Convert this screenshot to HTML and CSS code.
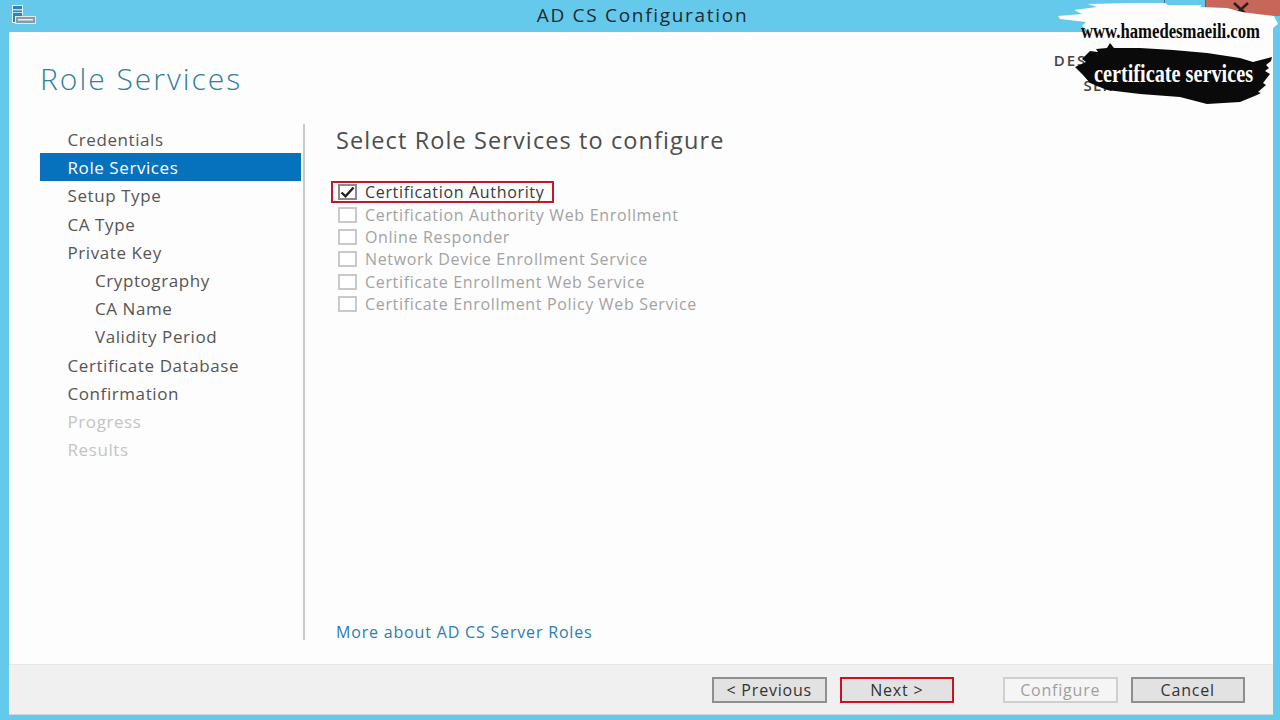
FILE: index.html
```html
<!DOCTYPE html>
<html lang="en">
<head>
<meta charset="utf-8">
<title>AD CS Configuration</title>
<link rel="stylesheet" href="styles.css">
</head>
<body>
<div class="window">
  <header class="titlebar">
    <svg class="app-icon" width="26" height="26" viewBox="0 0 26 26">
      <rect x="1.5" y="1.5" width="10" height="17" fill="#2f7fc4" stroke="#e6f3fa" stroke-width="1"/>
      <rect x="2" y="5" width="9" height="1.5" fill="#bfe0f2"/>
      <rect x="2" y="8" width="9" height="1" fill="#bfe0f2"/>
      <path d="M11 11h8v2h-8z" fill="#a9b4bb"/>
      <rect x="4.5" y="12.5" width="20" height="7" fill="#8b9aa5" stroke="#dfeaef" stroke-width="1"/>
      <rect x="7" y="15" width="15" height="1.5" fill="#e4edf1"/>
    </svg>
    <div class="title">AD CS Configuration</div>
    <div class="controls">
      <span class="ctl"></span>
      <span class="ctl"></span>
      <span class="ctl close"><svg width="16" height="16" viewBox="0 0 16 16"><path d="M1 2 15 15M15 2 1 15" stroke="#2a2220" stroke-width="2.6" fill="none"/></svg></span>
    </div>
  </header>
  <main class="panel">
    <div class="head">
      <h1>Role Services</h1>
      <div class="dest"><span class="dest-label">DESTINATION SERVER</span><span>SERVER.contoso.lan</span></div>
    </div>
    <div class="body">
      <nav class="nav">
        <a>Credentials</a>
        <a class="active">Role Services</a>
        <a>Setup Type</a>
        <a>CA Type</a>
        <a>Private Key</a>
        <a class="sub">Cryptography</a>
        <a class="sub">CA Name</a>
        <a class="sub">Validity Period</a>
        <a>Certificate Database</a>
        <a>Confirmation</a>
        <a class="off">Progress</a>
        <a class="off">Results</a>
      </nav>
      <section class="content">
        <h2>Select Role Services to configure</h2>
        <ul class="roles">
          <li class="role on"><span class="box"><svg width="15" height="12" viewBox="0 0 15 12"><path d="M1.5 6.5 5.5 10.3 13.5 1.5" fill="none" stroke="#222" stroke-width="2.4"/></svg></span>Certification Authority</li>
          <li class="role"><span class="box"></span>Certification Authority Web Enrollment</li>
          <li class="role"><span class="box"></span>Online Responder</li>
          <li class="role"><span class="box"></span>Network Device Enrollment Service</li>
          <li class="role"><span class="box"></span>Certificate Enrollment Web Service</li>
          <li class="role"><span class="box"></span>Certificate Enrollment Policy Web Service</li>
        </ul>
        <a class="more">More about AD CS Server Roles</a>
      </section>
    </div>
    <footer class="footer">
      <button class="btn">&lt; Previous</button>
      <button class="btn next">Next &gt;</button>
      <button class="btn dis">Configure</button>
      <button class="btn">Cancel</button>
    </footer>
  </main>
</div>
<div class="mark">
  <svg class="brush" width="228" height="110" viewBox="0 0 228 110">
    <path d="M6 16 30 14 22 10 45 7 36 4 80 3 113 3 116 5 150 5 148 7 175 8 190 12 205 14 222 16 226 24 221 28 221 66 150 66 150 50 40 34 30 26 34 22 8 19Z" fill="#fdfdfd"/>
    <path d="M23 67 34 62 30 59 38 51 46 52 44 49 55 48 58 43 62 48 88 48 121 50 155 53 188 58 201 62 220 57 219 61 214 65 217 68 213 71 218 74 211 83 214 85 206 92 209 93 205 95 188 102 155 104 128 97 88 94 55 90 38 83 31 75Z" fill="#0a0a0a"/>
  </svg>
  <div class="site">www.hamedesmaeili.com</div>
  <div class="tag">certificate services</div>
</div>
</body>
</html>
```
FILE: styles.css
```css
*, *::after { box-sizing: border-box; }
html, body { margin: 0; height: 100%; overflow: hidden; }
body { width: 1280px; height: 720px; position: relative; font-family: "Open Sans", "Liberation Sans", sans-serif; background: #65c9ec; }
.window { width: 1280px; height: 720px; display: flex; flex-direction: column; padding: 0 7px 5px 9px; }
.titlebar { height: 32px; margin: 0 -7px 0 -9px; display: flex; align-items: flex-start; position: relative; justify-content: center; }
.app-icon { position: absolute; left: 11px; top: 4px; }
.title { font-size: 19px; line-height: 30px; color: #1e2a30; letter-spacing: 1.7px; margin-left: 5px; }
.controls { position: absolute; right: 0; top: 0; display: flex; height: 16px; }
.ctl { width: 41px; border-right: 1px solid #3f6f86; }
.ctl.close { width: 74px; background: #c9665a; text-align: center; border: 0; padding-right: 4px; overflow: hidden; }
.panel { flex: 1; background: #fdfdfd; display: flex; flex-direction: column; min-height: 0; }
.head { height: 92px; display: flex; justify-content: space-between; padding: 26px 0 0 31px; flex: none; }
h1 { margin: 0; font-size: 30px; line-height: 42px; font-weight: 300; color: #2f80a2; letter-spacing: 2px; }
.dest { display: flex; flex-direction: column; align-items: flex-end; padding: 0 27px 0 0; margin-top: -10px; font-size: 15px; font-weight: 600; line-height: 25px; letter-spacing: 1.15px; color: #444; }
.dest-label { letter-spacing: 2px; }
.body { flex: 1; display: flex; min-height: 0; align-items: flex-start; }
.nav { width: 263px; margin-left: 31px; flex: none; display: flex; flex-direction: column; padding-right: 2px; }
.nav a { height: 28.2px; line-height: 28px; padding: 1px 0 0 27.5px; font-size: 17px; letter-spacing: 0.58px; color: #555; white-space: nowrap; }
.nav a:first-child { margin-top: 1px; }
.nav a.active { background: #0672bd; color: #fff; }
.nav a.sub { padding-left: 55px; }
.nav a.off { color: #c4c4c4; }
.content { flex: 1; border-left: 2px solid #c8c8c8; padding: 1px 0 0 31px; display: flex; flex-direction: column; height: 516px; }
h2 { margin: 0; font-size: 23.5px; line-height: 30px; font-weight: 400; color: #4d4d4d; letter-spacing: 1.1px; white-space: nowrap; }
.roles { list-style: none; margin: 26px 0 0; padding: 0; display: flex; flex-direction: column; }
.role { height: 22.4px; display: flex; align-items: center; font-size: 16px; letter-spacing: 0.67px; color: #a3a3a3; white-space: nowrap; position: relative; }
.box { width: 19px; height: 16px; border: 2px solid #c9c9c9; margin: 0 8px 0 2px; display: flex; align-items: center; justify-content: center; background: #fff; flex: none; }
.role.on { color: #3a3a3a; }
.role.on .box { border-color: #8a8a8a; }
.role.on::after { content: ""; position: absolute; left: -5px; top: 0; width: 223px; height: 22px; border: 2px solid #c3172a; }
.more { margin-top: auto; font-size: 16px; line-height: 22px; letter-spacing: 0.82px; color: #2b7db5; position: relative; top: 3px; white-space: nowrap; }
.footer { height: 51px; flex: none; background: #f0f0f0; border-top: 1px solid #e6e6e6; border-bottom: 1px solid #cfd8dc; display: flex; align-items: center; justify-content: flex-end; padding: 1px 28px 0 0; gap: 13px; }
.btn { width: 114.5px; height: 26px; font: inherit; font-size: 16px; letter-spacing: 0.8px; line-height: 22px; color: #333; background: #e2e2e2; border: 2px solid #8f8f8f; padding: 0 0 1px; }
.btn.next { border-color: #d0101f; margin-right: 36px; }
.btn.dis { color: #a0a0a0; background: #f5f5f5; border-color: #cfcfcf; }
.mark { position: absolute; left: 1052px; top: 0; width: 228px; height: 110px; }
.brush { position: absolute; left: 0; top: 0; }
.site, .tag { position: absolute; white-space: nowrap; font-family: "Liberation Serif", serif; font-weight: 700; transform-origin: left center; }
.site { left: 29px; top: 20px; font-size: 20px; line-height: 22px; color: #0a0a0a; transform: scaleX(0.835); }
.tag { left: 42px; top: 60px; font-size: 25px; line-height: 28px; color: #fff; transform: scaleX(0.81); }
```
